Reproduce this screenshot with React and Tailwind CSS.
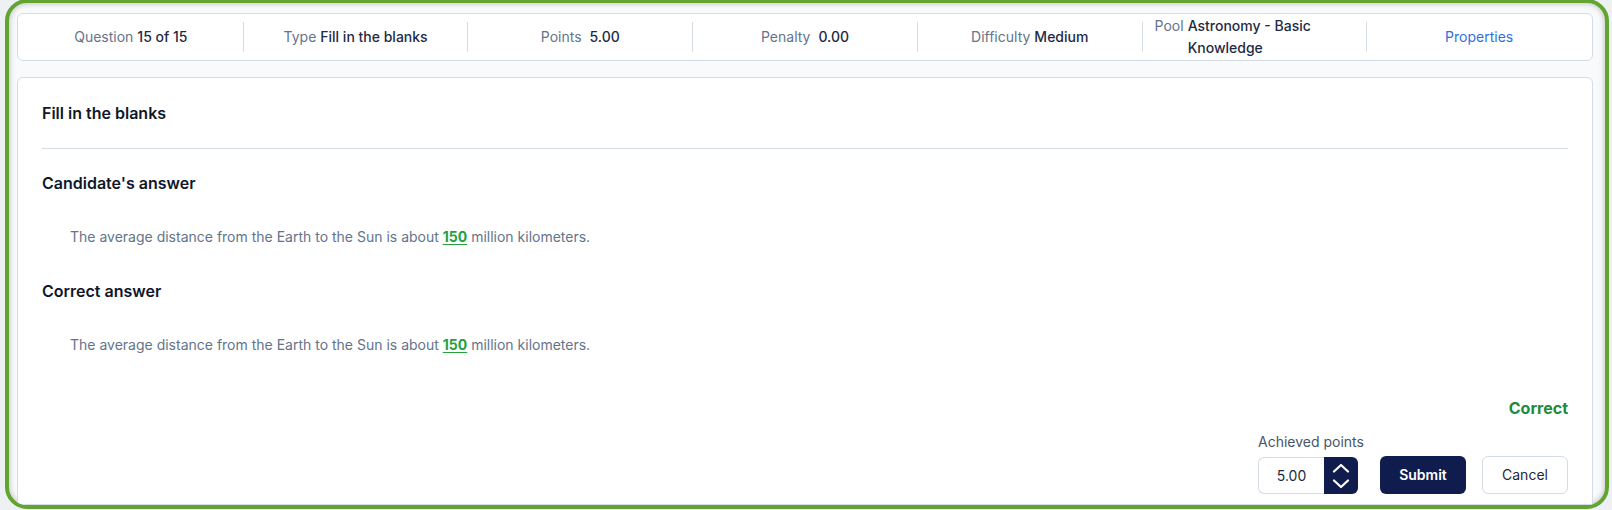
const items = [
  { label: "Question", value: "15 of 15" },
  { label: "Type", value: "Fill in the blanks" },
  { label: "Points", value: "5.00", wide: true },
  { label: "Penalty", value: "0.00", wide: true },
  { label: "Difficulty", value: "Medium" },
  { label: "Pool", value: "Astronomy - Basic Knowledge" },
];

const Sentence = () => (
  <p className="pl-7 text-sm leading-5 text-[#64748b]">
    The average distance from the Earth to the Sun is about{" "}
    <span className="font-bold text-[#25a03c] underline underline-offset-2">150</span>{" "}
    million kilometers.
  </p>
);

export default function App() {
  return (
    <div className="h-[510px] overflow-hidden bg-[#eef1f4] pl-[5px] pr-[3px] font-['Inter',sans-serif]">
      <div className="-mt-px flex h-[510px] flex-col gap-4 overflow-hidden rounded-[22px] border-4 border-[#63a32f] bg-[#f8fafc] pl-2 pr-3 pt-[10px] shadow-[inset_0_0_6px_rgba(0,0,0,0.28)]">
        {/* top info bar */}
        <div className="flex h-12 shrink-0 items-center rounded-md border border-[#d5dce6] bg-white px-px">
          {items.map((it) => (
            <div
              key={it.label}
              className="flex h-[30px] flex-1 items-center justify-center border-r border-[#d5dce6] px-3 text-sm leading-[22px]"
            >
              <div className="flex items-start">
                <span className="shrink-0 text-[#64748b]">{it.label}</span>
                <span className={`${it.wide ? "ml-2" : "ml-1"} text-left font-medium text-[#1e2a44]`}>
                  {it.value}
                </span>
              </div>
            </div>
          ))}
          <div className="flex h-[30px] flex-1 items-center justify-center px-3 text-sm text-[#2f6fe4]">
            Properties
          </div>
        </div>

        {/* question card */}
        <div className="flex-1 rounded-t-md border border-[#d5dce6] bg-white px-6 pt-[23px]">
          <h2 className="text-base font-semibold leading-6 text-[#0f172a]">Fill in the blanks</h2>
          <div className="mt-[23px] h-px bg-[#d3dbe5]"></div>

          <h3 className="mt-[22px] text-base font-semibold leading-6 text-[#0f172a]">Candidate's answer</h3>
          <div className="mt-[32px]">
            <Sentence />
          </div>

          <h3 className="mt-[32px] text-base font-semibold leading-6 text-[#0f172a]">Correct answer</h3>
          <div className="mt-[32px]">
            <Sentence />
          </div>

          <div className="flex flex-col items-end">
            <div className="mt-[41px] text-base font-bold leading-6 text-[#1c8b3d]">Correct</div>
            <div className="mt-3 flex items-end">
              <div className="w-[100px]">
                <div className="whitespace-nowrap text-sm leading-5 text-[#475569]">Achieved points</div>
                <div className="mt-[5px] flex h-[37px] w-[100px]">
                  <div className="flex flex-1 items-center justify-center rounded-l-md border border-r-0 border-[#d5dce6] text-sm text-[#1e293b]">
                    5.00
                  </div>
                  <div className="flex w-[34px] flex-col items-center justify-center gap-[6px] rounded-r-md bg-[#111c4e]">
                    <svg width="18" height="10" viewBox="0 0 18 10" fill="none">
                      <path d="M2 8.5 9 2l7 6.5" stroke="white" strokeWidth="2.2" strokeLinecap="round" strokeLinejoin="round" />
                    </svg>
                    <svg width="18" height="10" viewBox="0 0 18 10" fill="none">
                      <path d="M2 1.5 9 8l7-6.5" stroke="white" strokeWidth="2.2" strokeLinecap="round" strokeLinejoin="round" />
                    </svg>
                  </div>
                </div>
              </div>
              <button className="ml-[22px] h-[38px] w-[86px] rounded-md bg-[#111c4e] text-sm font-semibold text-white">
                Submit
              </button>
              <button className="ml-4 h-[38px] w-[86px] rounded-md border border-[#d5dce6] bg-white text-sm text-[#1e293b]">
                Cancel
              </button>
            </div>
          </div>
        </div>
      </div>
    </div>
  );
}
